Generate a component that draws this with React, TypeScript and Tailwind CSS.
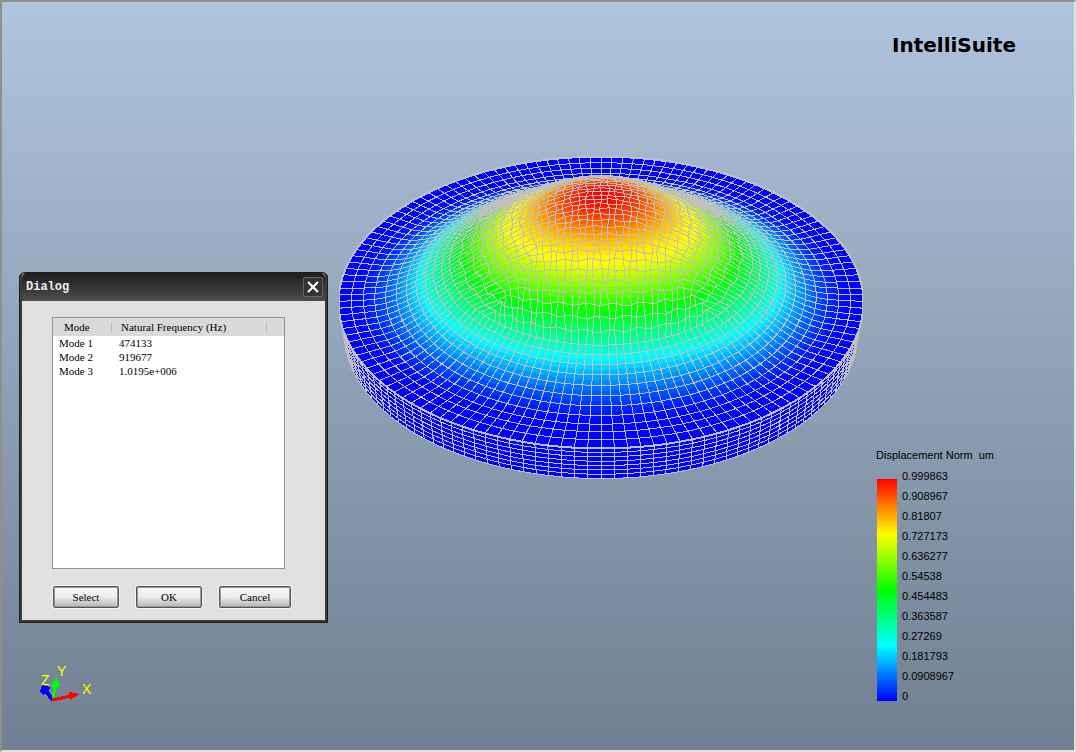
// Modal analysis viewport: a deformed disc mesh coloured by displacement,
// the colour legend, the axis triad and the mode selection dialog.

import type { ReactNode } from 'react'

type Vec = [number, number]
type Patch = { points: string; color: string }
type Face = { depth: number; outline: string; patches: Patch[] }

const MODES = [
  { name: 'Mode 1', frequency: '474133' },
  { name: 'Mode 2', frequency: '919677' },
  { name: 'Mode 3', frequency: '1.0195e+006' },
]

const LEGEND = [
  '0.999863', '0.908967', '0.81807', '0.727173', '0.636277', '0.54538',
  '0.454483', '0.363587', '0.27269', '0.181793', '0.0908967', '0',
]

// Mesh density: a square core joined to polar rings
const CORE = 34
const SEGMENTS = CORE * 4
const RINGS = 11
const CORE_RADIUS = 0.58
const LAYERS = 7

// Clamped plate profile, 1 in the centre and 0 outside the membrane
function displacement(r: number) {
  const q = r / 0.88
  return q >= 1 ? 0 : (1 - q * q) ** 2
}

// Blue, cyan, green, yellow, red. The last band is eased, to keep the red small
function heat([x, y]: Vec) {
  const t = displacement(Math.hypot(x * 0.9, y)) * 4
  const f = Math.round((t % 1) * 255)
  if (t < 1) return `rgb(0,${f},255)`
  if (t < 2) return `rgb(0,255,${255 - f})`
  if (t < 3) return `rgb(${f},255,0)`
  if (t < 4) return `rgb(255,${Math.round(255 * (1 - (t - 3) ** 1.6))},0)`
  return 'rgb(255,0,0)'
}

function project([x, y]: Vec) {
  const s = 1 / (1 - 0.1 * y)
  const lift = displacement(Math.hypot(x, y))
  return `${(262 + 260.7 * x * s).toFixed(1)},${(133 + (144 * y - 93 * lift) * s).toFixed(1)}`
}

function projectWall([x, y]: Vec, t: number) {
  const s = (1 - 0.02 * t) / (1 - 0.1 * y)
  return `${(262 + 260.7 * x * s).toFixed(1)},${(133 + (144 * y + 31 * t) * s).toFixed(1)}`
}

// Square grid node bent towards a circle the nearer it is to the edge
function coreNode(i: number, j: number): Vec {
  const u = (i / CORE) * 2 - 1
  const v = (j / CORE) * 2 - 1
  const m = Math.max(Math.abs(u), Math.abs(v))
  if (m === 0) return [0, 0]
  const a = Math.abs(u) > Math.abs(v)
    ? Math.atan2(Math.tan((v / m) * (Math.PI / 4)), Math.sign(u))
    : Math.atan2(Math.sign(v), Math.tan((u / m) * (Math.PI / 4)))
  const blend = m ** 1.5
  const jitter = m < 0.97 ? 0.005 : 0
  const x = CORE_RADIUS * (m * Math.cos(a) * blend + u * 0.82 * (1 - blend))
  const y = CORE_RADIUS * (m * Math.sin(a) * blend + v * 0.82 * (1 - blend))
  return [
    x + jitter * Math.sin(i * 2.3 + j * 1.1),
    y + jitter * Math.sin(i * 1.7 - j * 2.9),
  ]
}

function ringNode(k: number, n: number): Vec {
  const t = k / RINGS
  const r = CORE_RADIUS + (1 - CORE_RADIUS) * (0.75 * t + 0.25 * t * t)
  const a = (n / SEGMENTS) * 2 * Math.PI + Math.PI / 4
  return [r * Math.cos(a), r * Math.sin(a)]
}

function middle(...nodes: Vec[]): Vec {
  return [
    nodes.reduce((s, p) => s + p[0], 0) / nodes.length,
    nodes.reduce((s, p) => s + p[1], 0) / nodes.length,
  ]
}

function patch(nodes: Vec[]): Patch {
  return { points: nodes.map(project).join(' '), color: heat(middle(...nodes)) }
}

// Each cell is filled in four patches, to soften the colour steps
function topFace(a: Vec, b: Vec, c: Vec, d: Vec): Face {
  const center = middle(a, b, c, d)
  const outline = [a, b, c, d].map(project).join(' ')
  if (Math.hypot(center[0], center[1]) > 0.95) {
    return { depth: center[1], outline, patches: [patch([a, b, c, d])] }
  }
  const ab = middle(a, b)
  const bc = middle(b, c)
  const cd = middle(c, d)
  const da = middle(d, a)
  return {
    depth: center[1],
    outline,
    patches: [
      patch([a, ab, center, da]),
      patch([ab, b, bc, center]),
      patch([center, bc, c, cd]),
      patch([da, center, cd, d]),
    ],
  }
}

function buildTop() {
  const faces: Face[] = []
  for (let i = 0; i < CORE; i++) {
    for (let j = 0; j < CORE; j++) {
      faces.push(topFace(coreNode(i, j), coreNode(i + 1, j), coreNode(i + 1, j + 1), coreNode(i, j + 1)))
    }
  }
  for (let k = 0; k < RINGS; k++) {
    for (let n = 0; n < SEGMENTS; n++) {
      faces.push(topFace(ringNode(k, n), ringNode(k + 1, n), ringNode(k + 1, n + 1), ringNode(k, n + 1)))
    }
  }
  // Back to front, so the dome hides what lies behind it
  return faces.sort((a, b) => a.depth - b.depth)
}

function buildWall() {
  const faces: string[] = []
  for (let n = 0; n < SEGMENTS; n++) {
    const a = ringNode(RINGS, n)
    const b = ringNode(RINGS, n + 1)
    if (a[1] < -0.1) continue
    for (let l = 0; l < LAYERS; l++) {
      const t0 = l / LAYERS
      const t1 = (l + 1) / LAYERS
      faces.push([projectWall(a, t0), projectWall(b, t0), projectWall(b, t1), projectWall(a, t1)].join(' '))
    }
  }
  return faces
}

const TOP = buildTop()
const WALL = buildWall()
const RIM = Array.from({ length: SEGMENTS }, (_, n) => project(ringNode(RINGS, n))).join(' ')

function DiscMesh() {
  return (
    <svg width="524" height="326" viewBox="0 0 524 326" shapeRendering="crispEdges" role="img" aria-label="Displacement mesh">
      <g stroke="#c0c0c0" strokeWidth="1">
        {WALL.map((points, i) => <polygon key={i} points={points} fill="#0000ff" />)}
        <polygon points={RIM} fill="#0000ff" strokeWidth="3" />
        {TOP.map((face, i) => (
          <g key={i}>
            {face.patches.map((p, j) => <polygon key={j} points={p.points} fill={p.color} stroke="none" />)}
            <polygon points={face.outline} fill="none" />
          </g>
        ))}
      </g>
    </svg>
  )
}

function Legend() {
  return (
    <section className="text-[11px] text-black">
      <h2 className="whitespace-pre leading-[14px]">Displacement Norm  um</h2>
      <div className="mt-1 flex gap-[5px] pl-px">
        <div className="mt-[13px] h-[222px] w-5 bg-[linear-gradient(to_bottom,#f00,#ff0,#0f0,#0ff,#00f)]" />
        <ul>
          {LEGEND.map(value => <li key={value} className="leading-5">{value}</li>)}
        </ul>
      </div>
    </section>
  )
}

function AxisTriad() {
  return (
    <svg width="60" height="48" viewBox="0 -6 60 48" fontFamily="Liberation Sans, sans-serif" fontSize="14" role="img" aria-label="Axes">
      <g shapeRendering="crispEdges">
        <path d="M14 35 7 26" stroke="#00f" strokeWidth="4" />
        <path d="M3 20 11 22 10 27 4 30 1 27Z" fill="#00f" />
        <path d="M14 34 16 20" stroke="#0f0" strokeWidth="3" />
        <path d="M17 12 21 21 17 23 12 21Z" fill="#0f0" />
        <path d="M13 35 32 31" stroke="#f00" strokeWidth="3" />
        <path d="M30 27 41 29 31 35Z" fill="#f00" />
      </g>
      <g fill="#ff0">
        <text x="2" y="20">Z</text>
        <text x="18" y="11">Y</text>
        <text x="43" y="29">X</text>
      </g>
    </svg>
  )
}

function DialogButton({ children, className }: { children: ReactNode; className: string }) {
  return (
    <button
      type="button"
      className={`h-[22px] shrink-0 rounded-[2px] border border-[#555] bg-linear-to-b from-[#fafafa] via-[#ececec] to-[#b4b4b4] text-center leading-[18px] shadow-[0_0_0_1px_#f2f2f2,inset_0_0_0_1px_#999] ${className}`}
    >
      {children}
    </button>
  )
}

function ModeDialog() {
  return (
    <div
      role="dialog"
      aria-labelledby="dialog-title"
      className="w-[309px] rounded-t-[6px] border-[3px] border-t-0 border-[#3c3c3c] bg-[#e1e1e1] font-['Liberation_Serif',serif] text-[11px] text-black outline outline-1 -outline-offset-1 outline-[#1c1c1c]"
    >
      <div className="flex h-[29px] items-center justify-between rounded-t-[6px] bg-linear-to-b from-[#1c1c1c] to-[#4e4e4e] pl-1 pr-[2px]">
        <h1 id="dialog-title" className="font-['Liberation_Mono',monospace] text-xs font-bold text-[#eee]">Dialog</h1>
        <button type="button" aria-label="Close" className="flex size-5 items-center justify-center rounded-[2px] border border-[#666] bg-[#333]">
          <svg width="12" height="12" viewBox="0 0 12 12">
            <path d="M1 1 11 11M11 1 1 11" stroke="#fff" strokeWidth="2.2" />
          </svg>
        </button>
      </div>

      <div className="px-[30px] pt-4 pb-3">
        <div className="h-[252px] w-[233px] border border-[#929292] bg-white">
          <table className="w-full table-fixed border-collapse text-left">
            <thead className="bg-[#dadada]">
              <tr className="h-[18px] leading-[16px]">
                <th className="w-[58px] pl-[11px] font-normal">Mode</th>
                <th className="bg-[linear-gradient(#bbb,#bbb),linear-gradient(#bbb,#bbb)] bg-[size:1px_10px] bg-[position:0_4px,155px_4px] bg-no-repeat pl-[10px] font-normal whitespace-nowrap">
                  Natural Frequency (Hz)
                </th>
              </tr>
            </thead>
            <tbody>
              {MODES.map(mode => (
                <tr key={mode.name} className="h-[14px] leading-[14px]">
                  <td className="pl-[6px]">{mode.name}</td>
                  <td className="pl-2">{mode.frequency}</td>
                </tr>
              ))}
            </tbody>
          </table>
        </div>

        <div className="mt-[17px] flex gap-[17px] pl-px">
          <DialogButton className="w-[66px]">Select</DialogButton>
          <DialogButton className="w-[66px]">OK</DialogButton>
          <DialogButton className="w-[72px]">Cancel</DialogButton>
        </div>
      </div>
    </div>
  )
}

export default function App() {
  return (
    <main className="relative h-screen min-h-[720px] overflow-hidden border-2 border-t-[#8f8f8c] border-r-[#e4e2dc] border-b-[#e4e2dc] border-l-[#8f8f8c] bg-linear-to-b from-[#b0c4de] to-[#708090] font-['Liberation_Sans',sans-serif]">
      <div className="absolute top-[30px] right-[58px] font-['DejaVu_Sans',sans-serif] text-xl leading-[26px] font-bold text-black">
        IntelliSuite
      </div>
      <div className="absolute top-[153px] left-[337px]">
        <DiscMesh />
      </div>
      <div className="absolute top-[446px] left-[874px]">
        <Legend />
      </div>
      <div className="absolute top-[270px] left-[17px]">
        <ModeDialog />
      </div>
      <div className="absolute top-[657px] left-[37px]">
        <AxisTriad />
      </div>
    </main>
  )
}
